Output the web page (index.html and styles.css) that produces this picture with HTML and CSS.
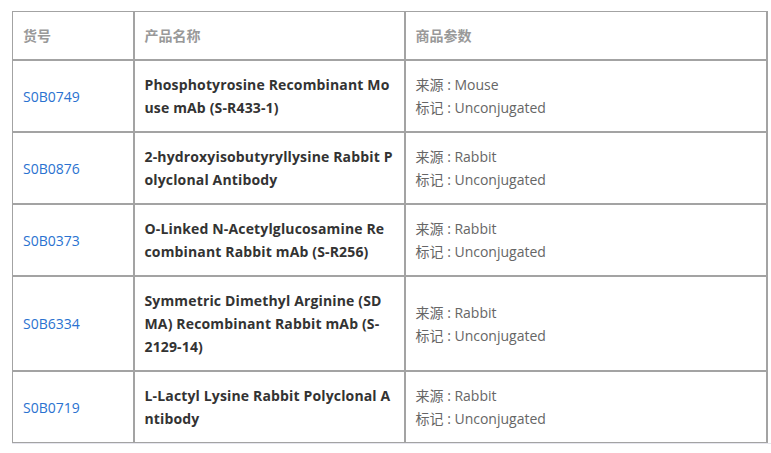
FILE: index.html
```html
<!DOCTYPE html>
<html lang="zh-CN">
<head>
<meta charset="utf-8">
<link rel="stylesheet" href="styles.css">
</head>
<body>
<div class="wrap">
<table class="tbl">
  <colgroup>
    <col class="c1"><col class="c2"><col class="c3">
  </colgroup>
  <thead>
    <tr><th>货号</th><th>产品名称</th><th>商品参数</th></tr>
  </thead>
  <tbody>
    <tr>
      <td><a class="code" href="#">S0B0749</a></td>
      <td class="name">Phosphotyrosine Recombinant Mo<br>use mAb (S-R433-1)</td>
      <td class="params">来源 : Mouse<br>标记 : Unconjugated</td>
    </tr>
    <tr>
      <td><a class="code" href="#">S0B0876</a></td>
      <td class="name">2-hydroxyisobutyryllysine Rabbit P<br>olyclonal Antibody</td>
      <td class="params">来源 : Rabbit<br>标记 : Unconjugated</td>
    </tr>
    <tr>
      <td><a class="code" href="#">S0B0373</a></td>
      <td class="name">O-Linked N-Acetylglucosamine Re<br>combinant Rabbit mAb (S-R256)</td>
      <td class="params">来源 : Rabbit<br>标记 : Unconjugated</td>
    </tr>
    <tr>
      <td><a class="code" href="#">S0B6334</a></td>
      <td class="name">Symmetric Dimethyl Arginine (SD<br>MA) Recombinant Rabbit mAb (S-<br>2129-14)</td>
      <td class="params">来源 : Rabbit<br>标记 : Unconjugated</td>
    </tr>
    <tr>
      <td><a class="code" href="#">S0B0719</a></td>
      <td class="name">L-Lactyl Lysine Rabbit Polyclonal A<br>ntibody</td>
      <td class="params">来源 : Rabbit<br>标记 : Unconjugated</td>
    </tr>
  </tbody>
</table>
</div>
</body>
</html>
```
FILE: styles.css
```css
html, body {
  margin: 0;
  padding: 0;
  background: #fff;
}
body {
  font-family: "Open Sans", "Noto Sans CJK SC", sans-serif;
  font-size: 14px;
  color: #333;
}
.wrap {
  margin: 11px 0 0 12px;
  width: 759px;
  height: 432px;
  overflow: hidden;
  border-bottom: 1px solid #e6e6ee;
}
.tbl {
  border-collapse: collapse;
  table-layout: fixed;
  width: 754px;
  border-left: 1px solid #a3a3a3;
  border-top: 1px solid #a3a3a3;
}
.c1 { width: 121px; }
.c2 { width: 271px; }
.c3 { width: 362px; }
th, td {
  border-right: 2px solid #a3a3a3;
  border-bottom: 2px solid #a3a3a3;
  padding: 12px 10px 12px 10px;
  line-height: 23px;
  text-align: left;
  vertical-align: middle;
}
th {
  font-weight: bold;
  color: #999;
  padding-top: 12px;
  padding-bottom: 12px;
}
.code {
  color: #2a72d0;
  text-decoration: none;
}
.name {
  font-weight: bold;
  color: #333;
  white-space: nowrap;
  letter-spacing: 0.15px;
}
.params {
  color: #666;
}
```
